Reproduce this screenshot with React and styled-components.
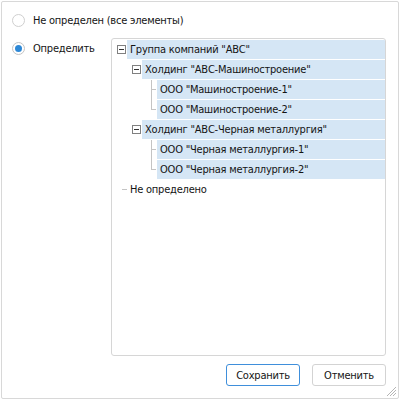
import React from "react";
import styled, { createGlobalStyle } from "styled-components";

const Global = createGlobalStyle`
  html, body { margin: 0; padding: 0; background: #ffffff; }
  body { font-family: "DejaVu Sans Condensed", "DejaVu Sans", sans-serif; font-size: 11px; letter-spacing: -0.22px; color: #141414; }
  * { box-sizing: border-box; }
`;

const Dialog = styled.div`
  position: relative;
  width: 398px;
  height: 398px;
  margin: 1px;
  border: 1px solid #d8d8d8;
  border-radius: 2px;
  background: #fff;
  padding: 10px 12px 12px 10px;
  display: flex;
  flex-direction: column;
`;

const RadioRow = styled.label`
  display: flex;
  align-items: center;
  height: 16px;
  gap: 8px;
  white-space: nowrap;
`;

const RadioCircle = styled.span`
  width: 13px;
  height: 13px;
  border-radius: 50%;
  border: 1px solid ${(p) => (p.$checked ? "#c4c4c4" : "#cfcfcf")};
  background: #fff;
  display: flex;
  align-items: center;
  justify-content: center;
  flex: none;
  &::after {
    content: "";
    width: 7px;
    height: 7px;
    border-radius: 50%;
    background: ${(p) => (p.$checked ? "#2d88d6" : "transparent")};
  }
`;

const Body = styled.div`
  margin-top: 10px;
  display: flex;
  flex: 1;
  min-height: 0;
`;

const LeftCol = styled.div`
  width: 99px;
  flex: none;
  padding-top: 2px;
`;

const TreePanel = styled.div`
  flex: 1;
  border: 1px solid #d6d6d6;
  border-radius: 3px;
  padding-top: 1px;
  overflow: hidden;
`;

const Row = styled.div`
  display: flex;
  align-items: stretch;
  height: 20px;
  padding-left: ${(p) => 5 + p.$level * 15}px;
`;

const Slot = styled.span`
  position: relative;
  width: 10px;
  flex: none;
  display: flex;
  align-items: center;
  height: 19px;
`;

const Expander = styled.span`
  width: 9px;
  height: 9px;
  border: 1px solid #808080;
  background: #fff;
  position: relative;
  &::after {
    content: "";
    position: absolute;
    left: 1px;
    right: 1px;
    top: 3px;
    height: 1px;
    background: #333;
  }
`;

const VLine = styled.span`
  position: absolute;
  left: 4px;
  top: 0;
  width: 1px;
  height: ${(p) => (p.$last ? "10px" : "20px")};
  background: #c4c4c4;
`;

const HLine = styled.span`
  position: absolute;
  left: ${(p) => p.$from}px;
  top: 9px;
  width: ${(p) => p.$w}px;
  height: 1px;
  background: #c4c4c4;
`;

const Label = styled.span`
  flex: 1;
  height: 19px;
  display: flex;
  align-items: center;
  padding-left: 3px;
  white-space: nowrap;
  background: ${(p) => (p.$selected ? "#d5e6f5" : "transparent")};
`;

const Footer = styled.div`
  margin-top: 8px;
  display: flex;
  justify-content: flex-end;
  gap: 12px;
`;

const Button = styled.button`
  width: 74px;
  height: 22px;
  font: inherit;
  font-size: 11px;
  letter-spacing: -0.22px;
  color: #141414;
  background: #fff;
  border: 1px solid ${(p) => (p.$primary ? "#3f8fdb" : "#d3d3d3")};
  border-radius: 3px;
  padding: 0;
`;

const Grip = styled.svg`
  position: absolute;
  right: 1px;
  bottom: 1px;
`;

const tree = [
  { level: 0, text: 'Группа компаний "АВС"', kind: "open", sel: true },
  { level: 1, text: 'Холдинг "АВС-Машиностроение"', kind: "open", sel: true },
  { level: 2, text: 'ООО "Машиностроение-1"', kind: "child", sel: true, last: false },
  { level: 2, text: 'ООО "Машиностроение-2"', kind: "child", sel: true, last: true },
  { level: 1, text: 'Холдинг "АВС-Черная металлургия"', kind: "open", sel: true },
  { level: 2, text: 'ООО "Черная металлургия-1"', kind: "child", sel: true, last: false },
  { level: 2, text: 'ООО "Черная металлургия-2"', kind: "child", sel: true, last: true },
  { level: 0, text: "Не определено", kind: "rootleaf", sel: false },
];

function TreeRow({ item }) {
  return (
    <Row $level={item.level}>
      <Slot>
        {item.kind === "open" && <Expander />}
        {item.kind === "child" && (
          <>
            <VLine $last={item.last} />
            <HLine $from={4} $w={5} />
          </>
        )}
        {item.kind === "rootleaf" && <HLine $from={5} $w={5} />}
      </Slot>
      <Label $selected={item.sel}>{item.text}</Label>
    </Row>
  );
}

export default function App() {
  return (
    <>
      <Global />
      <Dialog>
        <RadioRow>
          <RadioCircle />
          Не определен (все элементы)
        </RadioRow>
        <Body>
          <LeftCol>
            <RadioRow>
              <RadioCircle $checked />
              Определить
            </RadioRow>
          </LeftCol>
          <TreePanel>
            {tree.map((t, i) => (
              <TreeRow key={i} item={t} />
            ))}
          </TreePanel>
        </Body>
        <Footer>
          <Button $primary>Сохранить</Button>
          <Button>Отменить</Button>
        </Footer>
        <Grip width="11" height="11" viewBox="0 0 11 11">
          <path d="M10 1 L1 10 M10 4 L4 10 M10 7 L7 10" stroke="#b5b5b5" strokeWidth="1" />
        </Grip>
      </Dialog>
    </>
  );
}
